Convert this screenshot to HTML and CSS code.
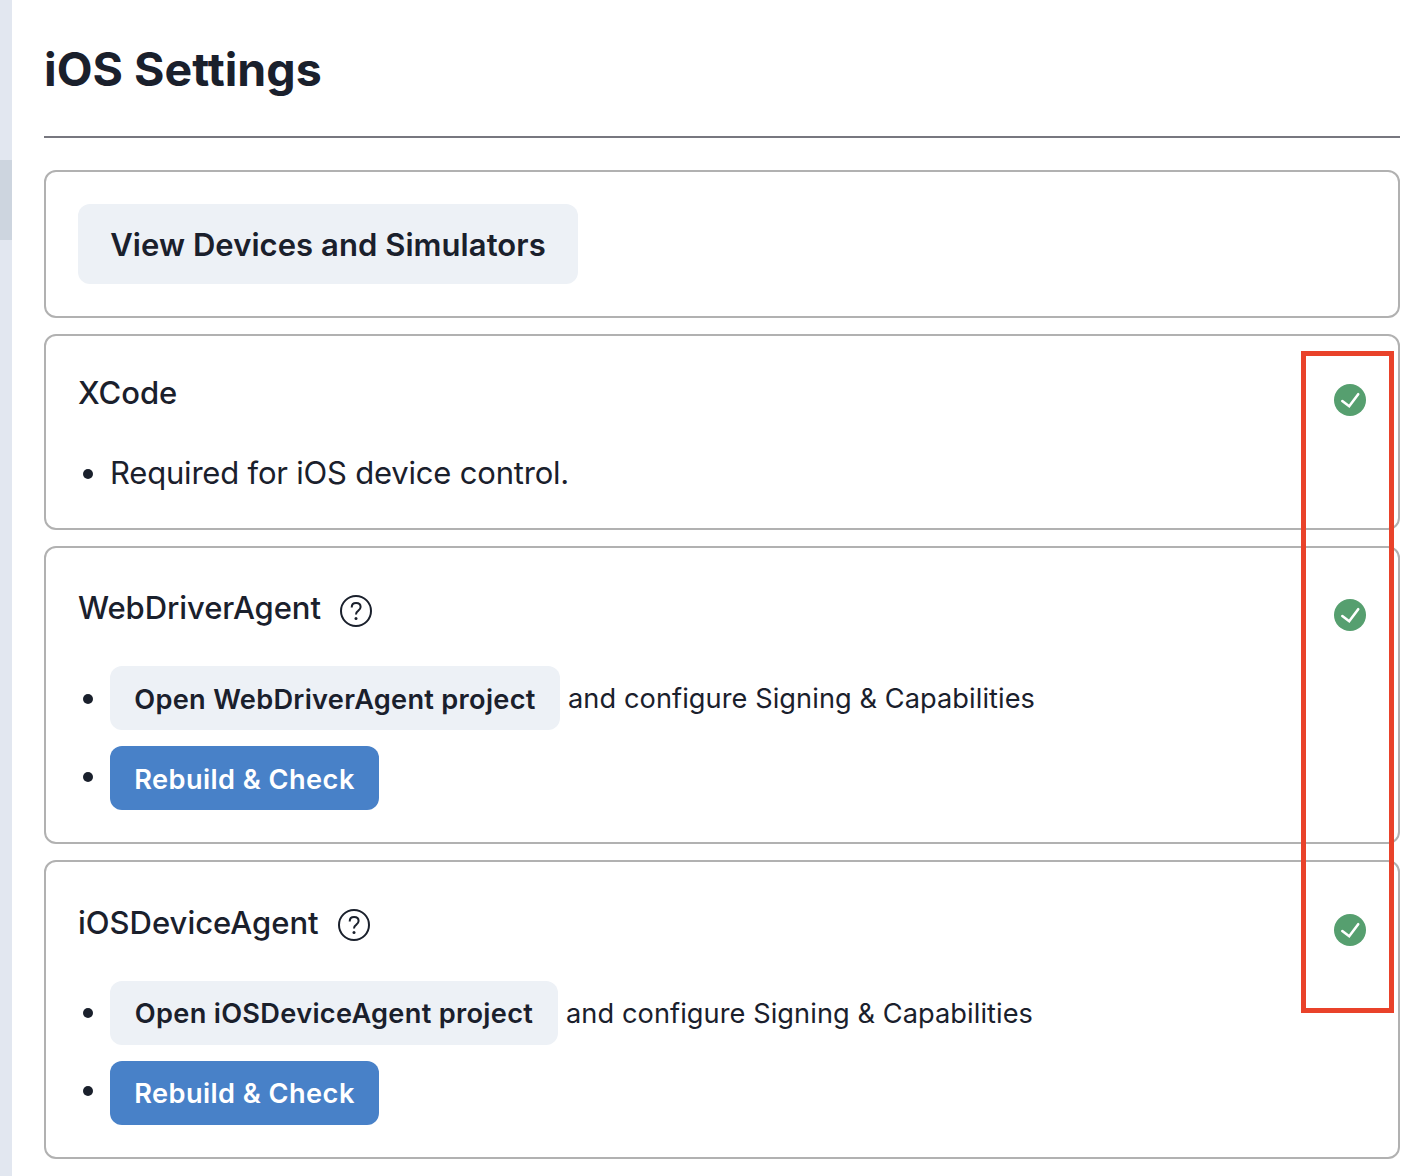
FILE: index.html
```html
<!DOCTYPE html>
<html lang="en">
<head>
<meta charset="utf-8">
<title>iOS Settings</title>
<link rel="stylesheet" href="styles.css">
</head>
<body>
<div class="app">
  <aside class="rail"><div class="thumb"></div></aside>
  <main class="page">
    <h1>iOS Settings</h1>
    <section class="card devices"><button class="btn large">View Devices and Simulators</button></section>
    <section class="card xcode">
      <header class="head"><h2>XCode</h2><svg class="check" viewBox="0 0 32 32"><circle cx="16" cy="16" r="16"/><path d="M8.300 17 15.200 22.200 24.200 10.200"/></svg></header>
      <ul><li class="plain"><span>Required for iOS device control.</span></li></ul>
    </section>
    <section class="card agent">
      <header class="head"><h2>WebDriverAgent</h2><svg class="help" viewBox="0 0 32 32"><circle cx="16" cy="16" r="15"/><path d="M11.700 12.400C11.700 9.700 13.500 8 16.100 8c2.600 0 4.500 1.600 4.500 4 0 1.800-1 2.800-2.500 3.900-1.500 1-2.100 1.800-2.100 3.700"/><circle class="dot" cx="16" cy="23.500" r="1.500"/></svg><svg class="check" viewBox="0 0 32 32"><circle cx="16" cy="16" r="16"/><path d="M8.300 17 15.200 22.200 24.200 10.200"/></svg></header>
      <ul>
        <li><button class="btn open-wda">Open WebDriverAgent project</button><span class="note">and configure Signing &amp; Capabilities</span></li>
        <li class="rebuild"><button class="btn primary">Rebuild &amp; Check</button></li>
      </ul>
    </section>
    <section class="card agent last">
      <header class="head"><h2>iOSDeviceAgent</h2><svg class="help" viewBox="0 0 32 32"><circle cx="16" cy="16" r="15"/><path d="M11.700 12.400C11.700 9.700 13.500 8 16.100 8c2.600 0 4.500 1.600 4.500 4 0 1.800-1 2.800-2.500 3.900-1.500 1-2.100 1.800-2.100 3.700"/><circle class="dot" cx="16" cy="23.500" r="1.500"/></svg><svg class="check" viewBox="0 0 32 32"><circle cx="16" cy="16" r="16"/><path d="M8.300 17 15.200 22.200 24.200 10.200"/></svg></header>
      <ul>
        <li><button class="btn open-ida">Open iOSDeviceAgent project</button><span class="note">and configure Signing &amp; Capabilities</span></li>
        <li class="rebuild"><button class="btn primary">Rebuild &amp; Check</button></li>
      </ul>
    </section>
  </main>
  <div class="highlight"></div>
</div>
</body>
</html>
```
FILE: styles.css
```css
* { box-sizing: border-box; }
body { margin: 0; background: #fff; color: #1a202c; font-family: Inter, sans-serif; }
.app { position: relative; display: flex; height: 1176px; overflow: hidden; }
.rail { width: 12px; background: #e2e7f0; padding-top: 160px; }
.thumb { height: 80px; background: #cdd5df; }
.page { flex: 1; padding: 0 26px 0 32px; display: flex; flex-direction: column; }
h1 { margin: 0 0 32px; height: 138px; flex: none; border-bottom: 2px solid #77777f; padding-top: 39px; font-size: 46.5px; line-height: 60px; font-weight: 700; letter-spacing: 0.03px; }
h1, h2, .btn, li { white-space: nowrap; }
.card { flex: none; border: 2px solid #b1b1b1; border-radius: 12px; padding: 32px; margin-bottom: 16px; }
.devices { height: 148px; }
.xcode { height: 196px; }
.agent { height: 298px; }
.last { height: 299px; }
.head { display: flex; align-items: flex-start; height: 64px; }
h2 { width: 241px; margin: 4px 0 0; font-size: 31px; line-height: 48px; font-weight: 500; letter-spacing: -0.08px; }
.xcode h2 { margin-top: 1px; letter-spacing: 0; }
.last h2 { width: 239px; margin-top: 5px; letter-spacing: 0; }
.help { width: 32px; height: 32px; margin: 15px 0 0 21px; fill: none; stroke: #1a202c; stroke-width: 2; }
.help .dot { fill: #1a202c; stroke: none; }
.check { width: 32px; height: 32px; margin: 19px 0 0 auto; fill: #569f6f; }
.xcode .check { margin-top: 16px; }
.last .check { margin-top: 20px; }
.check path { fill: none; stroke: #fff; stroke-width: 2.6; stroke-linecap: round; }
ul { list-style: none; margin: 22px 0 0; padding: 0; display: flex; flex-direction: column; gap: 16px; }
.xcode ul { margin-top: 10px; }
.last ul { margin-top: 23px; }
li { display: flex; align-items: center; height: 64px; font-size: 27.2px; }
li::before { content: ""; width: 10px; height: 10px; margin: 0 17px 0 5px; border-radius: 50%; background: #1a202c; }
li:first-child::before { margin-top: 2px; }
.last li:first-child::before { margin-top: 0; }
.rebuild::before { margin-bottom: 2px; }
.last .rebuild::before { margin-bottom: 4px; }
.plain { height: 62px; font-size: 31px; letter-spacing: -0.2px; }
.plain span { padding-bottom: 2px; }
.note { margin-left: 8px; padding-top: 1px; letter-spacing: 0.07px; }
.btn { border: 0; border-radius: 12px; height: 64px; padding: 2px 24px 0; background: #edf1f6; color: #1a202c; font: 600 27.2px/62px Inter, sans-serif; }
.agent:not(.last) .btn { padding-top: 4px; line-height: 60px; }
.open-wda { width: 450px; letter-spacing: 0.28px; }
.open-ida { width: 448px; letter-spacing: 0.3px; }
.large { width: 500px; height: 80px; padding: 2px 32px 0; font-size: 31px; letter-spacing: 0.06px; }
.primary { width: 269px; background: #4881c8; color: #fff; letter-spacing: 0.44px; }
.highlight { position: absolute; left: 1301px; top: 351px; width: 93px; height: 662px; border: 5px solid #e9422a; }
```
